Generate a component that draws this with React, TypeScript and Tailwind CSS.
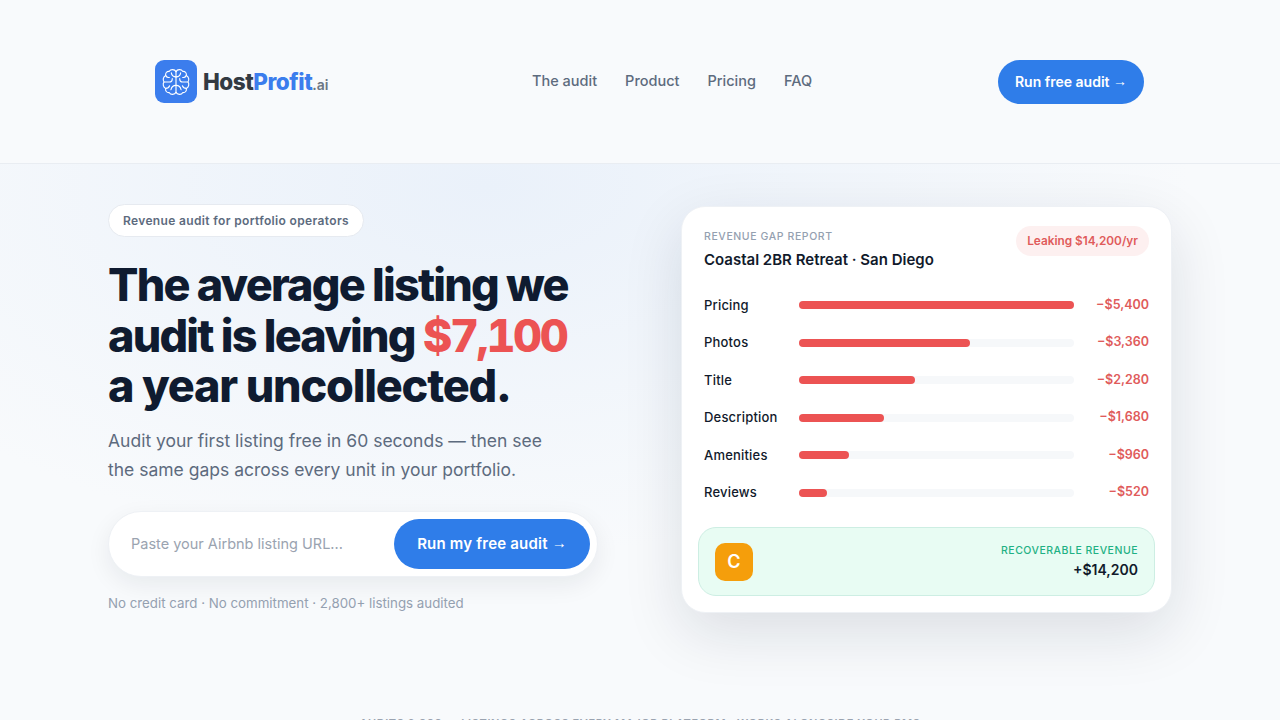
const gaps = [
  { label: "Pricing", pct: 100, amount: "−$5,400" },
  { label: "Photos", pct: 62, amount: "−$3,360" },
  { label: "Title", pct: 42, amount: "−$2,280" },
  { label: "Description", pct: 31, amount: "−$1,680" },
  { label: "Amenities", pct: 18, amount: "−$960" },
  { label: "Reviews", pct: 10, amount: "−$520" },
];

const navLinks = ["The audit", "Product", "Pricing", "FAQ"];

function BrainHalf() {
  return (
    <>
      <path d="M12 4.2C11 2.4 8 2.2 7 4C5 3.8 3.8 5.5 4.3 7.2C2.5 8 1.8 10.5 3 12C1.8 13.5 2.5 16 4.3 16.8C3.8 18.5 5 20.2 7 20C8 21.8 11 21.6 12 19.8" />
      <path d="M12 8.2C10 8.2 8.8 7 8.5 5.2" />
      <path d="M3 12H7C8.5 12 9.2 11 9.2 9.5" />
      <path d="M12 14.5C10 14.5 8.6 15.6 8.2 17.8" />
      <path d="M4.3 16.8C5.8 16.8 6.8 16 7.2 14.8" />
      <path d="M4.3 7.2C5 8.4 6 8.8 7 8.6" />
    </>
  );
}

function BrainIcon() {
  return (
    <svg viewBox="0 0 24 24" className="h-[32px] w-[32px]" fill="none" stroke="white" strokeWidth={0.85} strokeLinecap="round" strokeLinejoin="round">
      <path d="M12 4.2V19.8" />
      <BrainHalf />
      <g transform="matrix(-1 0 0 1 24 0)">
        <BrainHalf />
      </g>
    </svg>
  );
}

// the arrow is thinner than the one Inter ships
function Arrow() {
  return <span className="inline-block -translate-y-[1px] font-['Liberation_Sans',sans-serif] font-normal">→</span>;
}

export default function App() {
  return (
    <div className="h-[720px] overflow-hidden bg-[#f8fafc] font-['Inter',sans-serif]">
      {/* Header */}
      <header className="flex h-[164px] items-center border-b border-[#e9edf2] pl-[155px] pr-[136px]">
        <div className="flex w-[377px] items-center gap-[6px]">
          <div className="flex h-[43px] w-[42px] items-center justify-center rounded-[9px] bg-[#3b7ded]">
            <BrainIcon />
          </div>
          <span className="text-[22.5px] font-extrabold tracking-[-0.5px] text-[#333a42]">
            Host<span className="text-[#3b7ded]">Profit</span>
            <span className="text-[14px] font-semibold tracking-normal text-[#6b7684]">.ai</span>
          </span>
        </div>
        <nav className="flex flex-1 items-center gap-[28px] pb-[2px] text-[14.5px] font-medium text-[#5d6b7e]">
          {navLinks.map((link) => (
            <a key={link}>{link}</a>
          ))}
        </nav>
        <button className="h-[44px] w-[146px] rounded-full bg-[#2f7de9] text-[14px] font-semibold text-white">
          Run free audit <Arrow />
        </button>
      </header>

      <div className="bg-[radial-gradient(ellipse_55%_65%_at_38%_4%,#eaf1fa_0%,#f8fafc_100%)]">
        {/* Hero */}
        <main className="flex h-[551px] justify-between px-[108px] pt-[40px]">
          <section className="w-[490px]">
            <span className="inline-block rounded-full border border-[#e6eaf0] bg-white px-[14px] py-[7px] text-[12px] leading-[17px] font-semibold tracking-[0.35px] text-[#5d6b7e]">
              Revenue audit for portfolio operators
            </span>
            <h1 className="mt-[23px] text-[45px] leading-[50.5px] font-extrabold tracking-[-1.8px] text-[#0f1b30]">
              The average listing we
              <br />
              audit is leaving <span className="tracking-[-2.4px] text-[#ec5353] tabular-nums">$7,100</span>
              <br />
              <span className="tracking-[-1.2px]">a year uncollected.</span>
            </h1>
            <p className="mt-[14px] text-[17.5px] leading-[29px] text-[#5d6b7e]">
              Audit your first listing free in 60 seconds — then see
              <br />
              the same gaps across every unit in your portfolio.
            </p>
            <div className="mt-[27px] flex h-[66px] items-center justify-between rounded-full border border-[#eef1f5] bg-white pl-[22px] pr-[7px] shadow-[0_8px_24px_rgba(15,27,48,0.07)]">
              <span className="text-[14.5px] text-[#9aa3b0]">Paste your Airbnb listing URL...</span>
              <button className="h-[50px] w-[196px] rounded-full bg-[#2f7de9] pt-[2px] text-[15px] font-semibold tracking-[0.2px] text-white">
                Run my free audit <Arrow />
              </button>
            </div>
            <p className="mt-[17px] text-[13.3px] text-[#94a0b0]">
              No credit card · No commitment · 2,800+ listings audited
            </p>
          </section>

          {/* Report card */}
          <section className="mt-[2px] h-[407px] w-[491px] rounded-[24px] border border-[#eef1f5] bg-white px-[16px] pt-[22px] shadow-[0_20px_60px_rgba(15,27,48,0.12)]">
            <div className="flex items-start justify-between px-[6px]">
              <div>
                <div className="text-[10.5px] font-medium tracking-[0.6px] text-[#94a0b0]">REVENUE GAP REPORT</div>
                <div className="mt-[4px] text-[15px] font-semibold text-[#111a2b]">Coastal 2BR Retreat · San Diego</div>
              </div>
              <span className="-mt-[3px] rounded-full bg-[#fdf0f0] px-[11px] py-[7px] text-[11.8px] leading-[16px] font-semibold text-[#e05b5b]">
                Leaking $14,200/yr
              </span>
            </div>
            <div className="mt-[25px] flex flex-col gap-[19.5px] px-[6px]">
              {gaps.map((gap) => (
                <div key={gap.label} className="flex h-[18px] items-center">
                  <span className="w-[95px] text-[13px] font-medium tracking-[0.2px] text-[#111a2b]">{gap.label}</span>
                  <div className="h-[8px] w-[275px] rounded-full bg-[#f6f8fa]">
                    <div className="h-full rounded-full bg-[#ec5353]" style={{ width: `${gap.pct}%` }} />
                  </div>
                  <span className="flex-1 text-right text-[12.5px] font-semibold text-[#e05b5b]">{gap.amount}</span>
                </div>
              ))}
            </div>
            <div className="mt-[25.5px] flex h-[69px] items-center justify-between rounded-[18px] border border-[#cdeee3] bg-[#e8fcf3] px-[16px]">
              <div className="flex h-[38px] w-[38px] items-center justify-center rounded-[10px] bg-[#f59e0b] text-[18px] font-semibold text-white">
                C
              </div>
              <div className="text-right">
                <div className="text-[10.5px] font-medium tracking-[0.5px] text-[#1fb184]">RECOVERABLE REVENUE</div>
                <div className="text-[14px] font-semibold text-[#111a2b]">+$14,200</div>
              </div>
            </div>
          </section>
        </main>

        {/* Proof strip, cut by the fold */}
        <p className="text-center text-[11px] leading-[16px] font-semibold tracking-[0.6px] text-[#9aa3b0]">
          AUDITS 2,800+ · LISTINGS ACROSS EVERY MAJOR PLATFORM · WORKS ALONGSIDE YOUR PMS
        </p>
      </div>
    </div>
  );
}
